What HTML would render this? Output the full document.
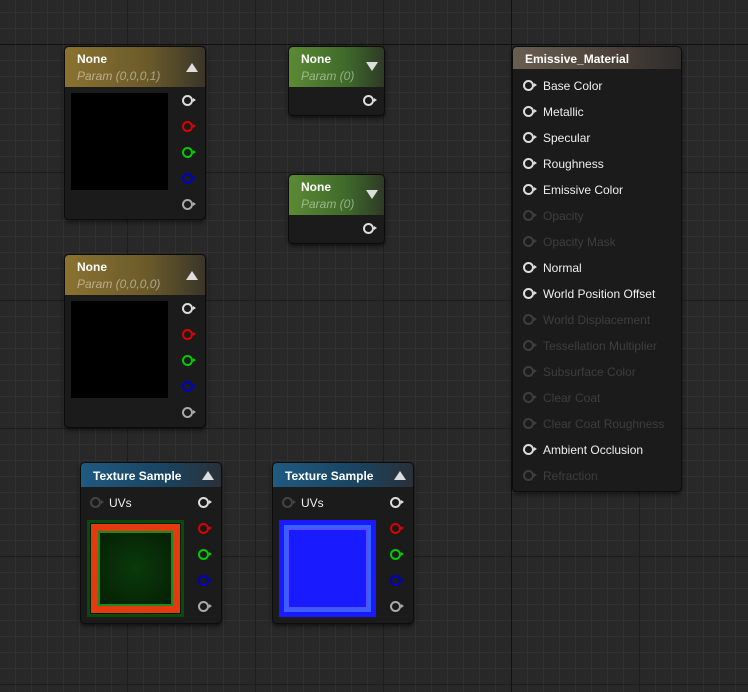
<!DOCTYPE html><html><head><style>
body{margin:0;width:748px;height:692px;overflow:hidden;background-color:#282828;
background-image:linear-gradient(to right,#1e1e1e 1px,transparent 1px),linear-gradient(to bottom,#1e1e1e 1px,transparent 1px),linear-gradient(to right,#323232 1px,transparent 1px),linear-gradient(to bottom,#323232 1px,transparent 1px);
background-size:128px 128px,128px 128px,16px 16px,16px 16px;
background-position:127px 44px,127px 44px,15px 12px,15px 12px;
font-family:"Liberation Sans",sans-serif;position:relative}
.ln{position:absolute;background:#111}
.n{position:absolute;background:#1b1b1b;border:1px solid #0c0c0c;border-radius:5px;box-shadow:0 2px 4px rgba(0,0,0,.6)}
.h{position:absolute;left:0;right:0;top:0;border-radius:4px 4px 0 0;color:#fff;font-weight:bold;font-size:12px}
.t{position:absolute;left:12px;top:5px}
.s{position:absolute;left:12px;top:22px;font-style:italic;font-weight:normal;color:rgba(255,255,255,.45)}
.tri{position:absolute;width:0;height:0;border-left:6px solid transparent;border-right:6px solid transparent}
.up{border-bottom:9px solid #ddd}.dn{border-top:9px solid #ddd}
.p{position:absolute;width:7px;height:7px;border:2px solid #ddd;border-radius:50%}
.p:after{content:"";position:absolute;left:9px;top:1px;border-left:3px solid currentColor;border-top:2.5px solid transparent;border-bottom:2.5px solid transparent}
.w{color:#ddd;border-color:#ddd}.r{color:#d00;border-color:#d00}.g{color:#0c0;border-color:#0c0}.b{color:#00c;border-color:#00c}.gr{color:#aaa;border-color:#aaa}.dk{color:#444;border-color:#444}
.prev{position:absolute;background:#000}
.lbl{position:absolute;font-size:12px;color:#eee}
.row{position:absolute;left:10px;font-size:12px;color:#eee;height:14px}
.row .p{left:0;top:1px}.row span{position:absolute;left:20px;top:0;white-space:nowrap}
.off{color:#3e3e3e}.off .p{border-color:#3e3e3e;color:#3e3e3e}
</style></head><body>
<div class="ln" style="left:0;top:44px;width:748px;height:1px"></div>
<div class="ln" style="left:511px;top:0;width:1px;height:692px"></div>

<div class="n" style="left:64px;top:46px;width:140px;height:172px">
 <div class="h" style="height:40px;background:linear-gradient(to right,#8a7230,#6a5a2a 60%,#3a3528)"><div class="t">None</div><div class="s">Param (0,0,0,1)</div><div class="tri up" style="left:121px;top:16px"></div></div>
 <div class="prev" style="left:6px;top:46px;width:97px;height:97px"></div>
 <div class="p w" style="left:117px;top:48px"></div><div class="p r" style="left:117px;top:74px"></div><div class="p g" style="left:117px;top:100px"></div><div class="p b" style="left:117px;top:126px"></div><div class="p gr" style="left:117px;top:152px"></div>
</div>
<div class="n" style="left:64px;top:254px;width:140px;height:172px">
 <div class="h" style="height:40px;background:linear-gradient(to right,#8a7230,#6a5a2a 60%,#3a3528)"><div class="t">None</div><div class="s">Param (0,0,0,0)</div><div class="tri up" style="left:121px;top:16px"></div></div>
 <div class="prev" style="left:6px;top:46px;width:97px;height:97px"></div>
 <div class="p w" style="left:117px;top:48px"></div><div class="p r" style="left:117px;top:74px"></div><div class="p g" style="left:117px;top:100px"></div><div class="p b" style="left:117px;top:126px"></div><div class="p gr" style="left:117px;top:152px"></div>
</div>
<div class="n" style="left:288px;top:46px;width:95px;height:68px">
 <div class="h" style="height:40px;background:linear-gradient(to right,#5b8a34,#3f6a2a 60%,#2e3a28)"><div class="t">None</div><div class="s">Param (0)</div><div class="tri dn" style="left:77px;top:15px"></div></div>
 <div class="p w" style="left:74px;top:48px"></div>
</div>
<div class="n" style="left:288px;top:174px;width:95px;height:68px">
 <div class="h" style="height:40px;background:linear-gradient(to right,#5b8a34,#3f6a2a 60%,#2e3a28)"><div class="t">None</div><div class="s">Param (0)</div><div class="tri dn" style="left:77px;top:15px"></div></div>
 <div class="p w" style="left:74px;top:48px"></div>
</div>
<div class="n" style="left:80px;top:462px;width:140px;height:160px">
 <div class="h" style="height:24px;background:linear-gradient(to right,#1f5a80,#1a4460 60%,#2a3038)"><div class="t" style="top:6px">Texture Sample</div><div class="tri up" style="left:121px;top:8px"></div></div>
 <div class="p dk" style="left:9px;top:34px"></div><div class="lbl" style="left:28px;top:33px">UVs</div>
 <div class="prev" style="left:6px;top:57px;width:97px;height:97px;background:radial-gradient(#0a3a0a,#031503);box-shadow:inset 0 0 0 3px #0a4a0a"><div style="position:absolute;inset:4px;border:7px solid #e33a10;box-shadow:inset 0 0 0 2px #1a8a1a"></div></div>
 <div class="p w" style="left:117px;top:34px"></div><div class="p r" style="left:117px;top:60px"></div><div class="p g" style="left:117px;top:86px"></div><div class="p b" style="left:117px;top:112px"></div><div class="p gr" style="left:117px;top:138px"></div>
</div>
<div class="n" style="left:272px;top:462px;width:140px;height:160px">
 <div class="h" style="height:24px;background:linear-gradient(to right,#1f5a80,#1a4460 60%,#2a3038)"><div class="t" style="top:6px">Texture Sample</div><div class="tri up" style="left:121px;top:8px"></div></div>
 <div class="p dk" style="left:9px;top:34px"></div><div class="lbl" style="left:28px;top:33px">UVs</div>
 <div class="prev" style="left:6px;top:57px;width:97px;height:97px;background:#1a1aff"><div style="position:absolute;inset:5px;border:3px solid #3a60ff;box-shadow:inset 0 0 0 2px #5050ff"></div></div>
 <div class="p w" style="left:117px;top:34px"></div><div class="p r" style="left:117px;top:60px"></div><div class="p g" style="left:117px;top:86px"></div><div class="p b" style="left:117px;top:112px"></div><div class="p gr" style="left:117px;top:138px"></div>
</div>
<div class="n" style="left:512px;top:46px;width:168px;height:444px">
 <div class="h" style="height:22px;background:linear-gradient(to right,#6a5e50,#4a4038 60%,#2e2c2a)"><div class="t" style="top:5px">Emissive_Material</div></div>
 <div class="row" style="top:32px"><div class="p w"></div><span>Base Color</span></div>
 <div class="row" style="top:58px"><div class="p w"></div><span>Metallic</span></div>
 <div class="row" style="top:84px"><div class="p w"></div><span>Specular</span></div>
 <div class="row" style="top:110px"><div class="p w"></div><span>Roughness</span></div>
 <div class="row" style="top:136px"><div class="p w"></div><span>Emissive Color</span></div>
 <div class="row off" style="top:162px"><div class="p"></div><span>Opacity</span></div>
 <div class="row off" style="top:188px"><div class="p"></div><span>Opacity Mask</span></div>
 <div class="row" style="top:214px"><div class="p w"></div><span>Normal</span></div>
 <div class="row" style="top:240px"><div class="p w"></div><span>World Position Offset</span></div>
 <div class="row off" style="top:266px"><div class="p"></div><span>World Displacement</span></div>
 <div class="row off" style="top:292px"><div class="p"></div><span>Tessellation Multiplier</span></div>
 <div class="row off" style="top:318px"><div class="p"></div><span>Subsurface Color</span></div>
 <div class="row off" style="top:344px"><div class="p"></div><span>Clear Coat</span></div>
 <div class="row off" style="top:370px"><div class="p"></div><span>Clear Coat Roughness</span></div>
 <div class="row" style="top:396px"><div class="p w"></div><span>Ambient Occlusion</span></div>
 <div class="row off" style="top:422px"><div class="p"></div><span>Refraction</span></div>
</div>
</body></html>
